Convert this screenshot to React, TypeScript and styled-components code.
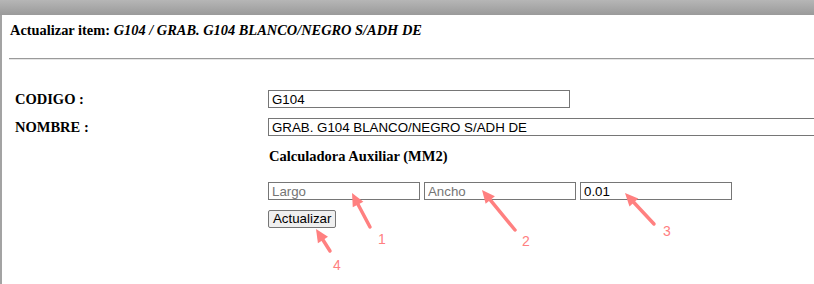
import * as React from "react"
import styled, { createGlobalStyle } from "styled-components"

const GlobalStyle = createGlobalStyle`
    html, body {
        margin: 0;
        padding: 0;
        background: #fff;
        overflow: hidden;
    }
    body {
        width: 814px;
        height: 284px;
        font-family: "Liberation Serif", "Times New Roman", serif;
    }
`

const Page = styled.div`
    position: relative;
    width: 814px;
    height: 284px;
    overflow: hidden;
`

const TopBar = styled.div`
    height: 15px;
    background: linear-gradient(#b6b6b6, #9a9a9a);
`

const Panel = styled.div`
    height: 269px;
    border-left: 2px solid #a3a3a3;
    padding: 0 0 0 7px;
    box-sizing: border-box;
`

const Title = styled.h3`
    margin: 0;
    padding: 7px 0 0 1px;
    font-size: 14.4px;
    line-height: 17px;
    font-weight: 700;
    color: #000;
    white-space: nowrap;

    & > em {
        font-style: italic;
    }
`

const Rule = styled.hr`
    margin: 19px 0 0;
    width: 900px;
    border: 0;
    border-top: 1px solid #9a9a9a;
    border-bottom: 1px solid #e6e6e6;
`

const Form = styled.div`
    display: grid;
    grid-template-columns: 253px auto;
    row-gap: 10px;
    padding: 30px 0 0 6px;
    align-items: center;
`

const Label = styled.span`
    font-size: 14.5px;
    font-weight: 700;
    color: #000;
`

const TextInput = styled.input<{ $width: number }>`
    box-sizing: border-box;
    width: ${({ $width }) => $width}px;
    height: 18px;
    margin: 0;
    padding: 0 3px;
    border: 1px solid #767676;
    border-radius: 0;
    font-family: "Liberation Sans", Arial, sans-serif;
    font-size: 13.3px;
    color: #000;
    background: #fff;
    outline: none;

    &::placeholder {
        color: #757575;
    }
`

const SubTitle = styled.span`
    grid-column: 2;
    font-size: 14.5px;
    font-weight: 700;
    padding: 2px 0 0 1px;
`

const CalcRow = styled.div`
    grid-column: 2;
    display: flex;
    gap: 4px;
    margin-top: 7px;
`

const ButtonRow = styled.div`
    grid-column: 2;
    margin-top: 0;
    line-height: 0;
`

const Button = styled.button`
    box-sizing: border-box;
    height: 18px;
    padding: 0 4px;
    border: 1px solid #767676;
    border-radius: 2px;
    background: #efefef;
    font-family: "Liberation Sans", Arial, sans-serif;
    font-size: 13.3px;
    color: #000;
    line-height: 16px;
`

const Notes = styled.svg`
    position: absolute;
    left: 0;
    top: 0;
    pointer-events: none;
`

const Note = styled.text`
    fill: #ff8080;
    font-family: "Liberation Sans", Arial, sans-serif;
    font-size: 14px;
`

const arrows = [
    { tip: [352, 193], tail: [370, 227], n: "1", at: [382, 244] },
    { tip: [482, 190], tail: [515, 230], n: "2", at: [526, 246] },
    { tip: [625, 193], tail: [654, 224], n: "3", at: [667, 236] },
    { tip: [316, 229], tail: [330, 251], n: "4", at: [337, 270] },
]

function Arrow({ tip, tail }: { tip: number[]; tail: number[] }) {
    const dx = tip[0] - tail[0]
    const dy = tip[1] - tail[1]
    const len = Math.hypot(dx, dy)
    const ux = dx / len
    const uy = dy / len
    const head = 13
    const bx = tip[0] - ux * head
    const by = tip[1] - uy * head
    const w = 6
    return (
        <g>
            <line x1={tail[0]} y1={tail[1]} x2={bx + ux * 2} y2={by + uy * 2} stroke="#ff8080" strokeWidth={3.5} strokeLinecap="round" />
            <polygon
                points={`${tip[0]},${tip[1]} ${bx - uy * w},${by + ux * w} ${bx + uy * w},${by - ux * w}`}
                fill="#ff8080"
            />
        </g>
    )
}

export default function App() {
    return (
        <Page>
            <GlobalStyle />
            <TopBar />
            <Panel>
                <Title>
                    Actualizar item: <em>G104 / GRAB. G104 BLANCO/NEGRO S/ADH DE</em>
                </Title>
                <Rule />
                <Form>
                    <Label>CODIGO :</Label>
                    <TextInput $width={302} defaultValue="G104" />
                    <Label>NOMBRE :</Label>
                    <TextInput $width={600} defaultValue="GRAB. G104 BLANCO/NEGRO S/ADH DE" />
                    <SubTitle>Calculadora Auxiliar (MM2)</SubTitle>
                    <CalcRow>
                        <TextInput $width={152} placeholder="Largo" />
                        <TextInput $width={152} placeholder="Ancho" />
                        <TextInput $width={152} defaultValue="0.01" />
                    </CalcRow>
                    <ButtonRow>
                        <Button>Actualizar</Button>
                    </ButtonRow>
                </Form>
            </Panel>
            <Notes width={814} height={284}>
                {arrows.map((a) => (
                    <g key={a.n}>
                        <Arrow tip={a.tip} tail={a.tail} />
                        <Note x={a.at[0]} y={a.at[1]} textAnchor="middle">{a.n}</Note>
                    </g>
                ))}
            </Notes>
        </Page>
    )
}
